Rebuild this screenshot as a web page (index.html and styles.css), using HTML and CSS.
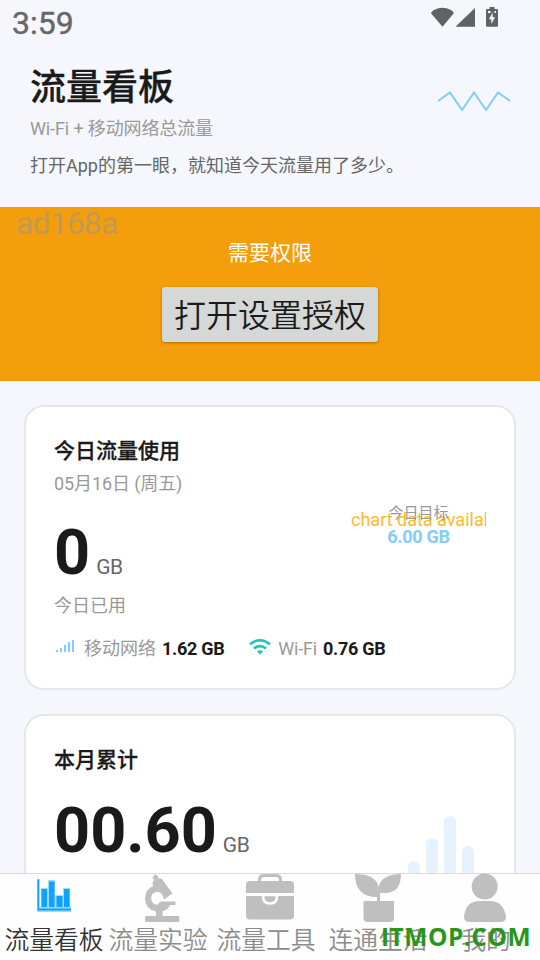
FILE: index.html
```html
<!DOCTYPE html>
<html lang="zh-CN">
<head>
<meta charset="utf-8">
<title>流量看板</title>
<link rel="stylesheet" href="styles.css">
</head>
<body>
<div class="screen">
  <div class="status">
    <span class="clock">3:59</span>
    <svg class="status-icons" width="70" height="24" viewBox="0 0 70 24" fill="#616264">
      <path d="M1 13.500Q1.500 11.500 4 10.200Q12.500 5.800 21 10.200Q23.500 11.500 23.800 13.500L12.500 27Z" transform="translate(0 -.3)"/>
      <path d="M25.500 26.800 45 8V26.800Z"/>
      <path fill-rule="evenodd" d="M59.500 7h5v2h2.200q1.300 0 1.300 1.300v15.200q0 1.300-1.300 1.300h-9.400q-1.300 0-1.300-1.300V10.300Q56 9 57.300 9h2.200zM62.600 12.500l-3.700 6.800h2.400v4.700l3.800-6.800h-2.500zM58 11v2h2.500v-2zM64.500 11v2h1.500v-2z"/>
    </svg>
  </div>
  <header class="header">
    <div>
      <h1>流量看板</h1>
      <p class="subtitle">Wi-Fi + 移动网络总流量</p>
      <p class="tagline">打开App的第一眼，就知道今天流量用了多少。</p>
    </div>
    <svg class="wave" width="72" height="24" viewBox="0 0 72 24" fill="none" stroke="#81cdfd" stroke-width="2"><path d="M0 13 12 4.500 24 22 36 4.500 48 22 60 4.500 72 13"/></svg>
  </header>
  <section class="banner">
    <span class="ad-mark">ad168a</span>
    <p>需要权限</p>
    <button>打开设置授权</button>
  </section>
  <main class="cards">
    <section class="card today">
      <h2>今日流量使用</h2>
      <p class="date">05月16日 (周五)</p>
      <div class="usage">
        <div class="amount"><b>0</b><span>GB</span></div>
        <p class="caption">今日已用</p>
        <div class="chart">
          <span class="no-data">chart data available.</span>
          <div class="goal"><span>今日目标</span><b>6.00 GB</b></div>
        </div>
      </div>
      <div class="split">
        <svg class="signal" width="24" height="24" viewBox="0 0 24 24" fill="#81cdfd"><path d="M2 13h2v2H2zM6 11h2v4H6zM10 8h2v7h-2zM14 5h2v10h-2zM18 3h2v12h-2z"/></svg>
        <span class="label">移动网络</span><b>1.62 GB</b>
        <svg class="wifi" width="24" height="24" viewBox="0 0 24 24" fill="none" stroke="#16c8c1" stroke-width="2.600"><path d="M2 7.300Q12-.8 22 7.300M5.800 11.500Q12 6.800 18.200 11.500"/><path fill="#16c8c1" stroke="none" d="M9 14.600q3-2.600 6 0l-3 3z"/></svg>
        <span class="label">Wi-Fi</span><b>0.76 GB</b>
      </div>
    </section>
    <section class="card month">
      <h2>本月累计</h2>
      <div class="amount"><b>00.60</b><span>GB</span></div>
      <div class="bars"><i class="b1"></i><i class="b2"></i><i class="b3"></i><i class="b4"></i></div>
    </section>
  </main>
  <nav class="tabs">
    <a class="tab active">
      <svg width="48" height="48" viewBox="0 0 48 48"><path fill="#9edaff" d="M7 5h3v27h31v6H7zM11 14h7v19h-7zM18 6h7v27h-7zM25 21h8v12h-8zM33 14h7v19h-7z"/><path fill="#0fa2fb" d="M7.500 5.500H9V34.500h32v2H7.500zM11.500 15h5.500v18h-5.500zM19 7.500h5.500V33H19zM26.500 22h6v11h-6zM34 15h5.500v18H34z"/></svg>
      <span>流量看板</span>
    </a>
    <a class="tab shifted">
      <svg width="48" height="48" viewBox="0 0 48 48" fill="#bfbfbf"><path d="M14.300 4 17 .3 20.300 2.500 20 4.300 23.500 4.500 34.500 19.500 26 25.500Q24.500 18 19 17.800Q13.300 18.500 13.200 24.500Q13.500 30.500 19.500 30.800L22.500 27.500H37.500V31H32Q30.500 35.500 24.500 37.500V42H40Q41.500 42 41.500 44V46.500Q41.500 48 40 48H8.500Q7 48 7 46.500V43.500Q7 42 8.500 42H18V37.500Q7 35 7 24.500Q7.500 15 15.300 12L14.300 9.500 16.300 5.500Z"/></svg>
      <span>流量实验</span>
    </a>
    <a class="tab shifted">
      <svg width="48" height="48" viewBox="0 0 48 48" fill="none"><path stroke="#bfbfbf" stroke-width="3" d="M13.500 8V5Q14 1.500 18 1.500H30Q34 1.500 34.500 5V8"/><path fill="#bfbfbf" d="M0 19V11Q0 7 4 7H44Q48 7 48 11V19ZM0 22H48V41Q48 45.500 44 45.500H4Q0 45.500 0 41Z"/><path fill="#bfbfbf" stroke="#fff" stroke-width="2.600" d="M17 21V22Q17 29.500 24 29.500Q31 29.500 31 22V21Z"/><path fill="#bfbfbf" d="M18 16h12v3H18z"/><path fill="#fff" d="M0 19h48v2.600H0z"/></svg>
      <span>流量工具</span>
    </a>
    <a class="tab">
      <svg width="48" height="48" viewBox="0 0 48 48" fill="#bfbfbf"><path d="M1 0Q22 0 24.500 13Q28 0 47 0Q47 19 31 19H26V27H40V44Q40 48 36 48H14Q9.500 48 9.500 44V27H23V23Q1 23 1 0Z"/></svg>
      <span>连通生活</span>
    </a>
    <a class="tab">
      <svg width="48" height="48" viewBox="0 0 48 48" fill="#bfbfbf"><circle cx="22.700" cy="12.500" r="13"/><path d="M2 42Q4 27 18 27H28Q41 27 44 42Q44.500 48 38 48H8Q1.500 48 2 42Z"/></svg>
      <span>我的</span>
    </a>
  </nav>
  <span class="watermark">ITMOP.COM</span>
</div>
</body>
</html>
```
FILE: styles.css
```css
* { box-sizing: border-box; }
body { margin: 0; }
h1, h2, p { margin: 0; }
svg { display: block; flex: none; overflow: visible; }

.screen {
  position: relative;
  display: flex;
  flex-direction: column;
  width: 540px;
  height: 960px;
  overflow: hidden;
  background: #f5f7fc;
  color: #1a1a1a;
  font-family: Roboto, "Noto Sans CJK SC", sans-serif;
}

.status {
  display: flex;
  justify-content: space-between;
  height: 48px;
  padding: 0 40px 0 12px;
}
.clock { font-size: 32px; line-height: 46px; -webkit-text-stroke: .4px #66676a; color: #66676a; }

.header {
  display: flex;
  justify-content: space-between;
  height: 159px;
  padding: 13px 30px 0;
}
h1 { font-size: 36px; line-height: 54px; font-weight: 500; -webkit-text-stroke: .3px #1a1a1a; }
.subtitle { margin-top: 1px; font-size: 18px; line-height: 26px; letter-spacing: -.12px; color: #999; }
.tagline { margin-top: 11px; font-size: 18px; line-height: 26px; color: #666; }
.wave { margin-top: 27px; }

.banner {
  position: relative;
  display: flex;
  flex-direction: column;
  align-items: center;
  height: 174px;
  padding-top: 30px;
  background: #f59e0b;
  color: #fff;
}
.banner p { font-size: 21px; line-height: 32px; }
.banner button {
  width: 216px;
  height: 55px;
  margin-top: 18px;
  padding: 3px 0 0;
  border: 0;
  border-radius: 3px;
  background: #d6d7d7;
  box-shadow: 0 1px 3px rgba(0, 0, 0, .3);
  color: #1b1b1b;
  font: 350 32px/52px Roboto, "Noto Sans CJK SC", sans-serif;
}
.ad-mark {
  position: absolute;
  left: 16px;
  top: -4px;
  font-size: 32px;
  line-height: 40px;
  letter-spacing: -.9px;
  color: rgba(140, 150, 160, .5);
}

.cards {
  display: flex;
  flex: 1;
  flex-direction: column;
  gap: 24px;
  min-height: 0;
  padding: 24px 24px 0;
  overflow: hidden;
}
.card {
  flex: none;
  height: 285px;
  padding: 28px;
  border: 2px solid #e5e7eb;
  border-radius: 20px;
  background: #fff;
}
h2 { font-size: 21px; line-height: 32px; font-weight: 500; -webkit-text-stroke: .3px #1a1a1a; }
.date { margin-top: 3px; font-size: 18px; line-height: 28px; letter-spacing: -.1px; color: #999; }
.amount { display: flex; align-items: baseline; gap: 6px; height: 74px; line-height: 74px; }
.amount b { font-size: 63px; }
.amount span { font-size: 21px; letter-spacing: -.5px; color: #666; }
.usage { position: relative; height: 137px; padding-top: 18px; }
.caption { margin-top: 2px; font-size: 18px; line-height: 28px; color: #999; }

.chart {
  position: absolute;
  top: 0;
  right: 0;
  width: 135px;
  height: 122px;
  overflow: hidden;
}
.no-data {
  display: block;
  margin-top: 10px;
  font-size: 18px;
  line-height: 24px;
  white-space: nowrap;
  color: #fdb92f;
}
.goal {
  position: absolute;
  top: 4px;
  left: 0;
  display: flex;
  flex-direction: column;
  align-items: center;
  width: 100%;
}
.goal span { font-size: 15px; line-height: 22px; color: #999; }
.goal b { font-size: 18px; line-height: 26px; letter-spacing: -.3px; color: #81cdfd; }

.split { display: flex; align-items: center; height: 28px; font-size: 18px; line-height: 28px; }
.split b { margin-left: 6px; font-weight: 700; letter-spacing: -.3px; }
.label { margin-left: 6px; color: #999; }
.wifi { margin-left: 24px; }
.wifi + .label { margin-left: 6px; letter-spacing: -.2px; }

.month { position: relative; }
.month .amount { margin-top: 18px; }
.bars {
  position: absolute;
  top: 100px;
  right: 40px;
  display: flex;
  align-items: flex-end;
  gap: 6px;
  height: 90px;
}
.bars i { width: 12px; border-radius: 6px; background: #e6f3fe; }
.b1 { height: 45px; }
.b2 { height: 68px; }
.b3 { height: 90px; }
.b4 { height: 60px; }

.tabs {
  display: flex;
  flex: none;
  height: 87px;
  border-top: 1px solid #d9dadd;
  background: #fefefe;
}
.tab {
  display: flex;
  flex-direction: column;
  align-items: center;
  width: 108px;
  font-size: 24.8px;
  font-weight: 350;
  line-height: 38px;
  white-space: nowrap;
  color: #8c8c8c;
}
.active { color: #333; }
.shifted span { margin-right: 8px; }

.watermark {
  position: absolute;
  left: 381px;
  top: 920px;
  font: 700 24.5px/34px "Open Sans", sans-serif;
  letter-spacing: .5px;
  color: #27961a;
}
```
